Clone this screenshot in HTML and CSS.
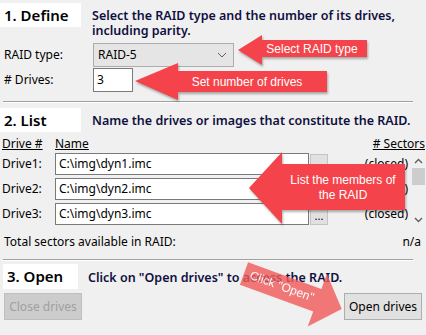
FILE: index.html
```html
<!DOCTYPE HTML>
<html lang="en">
  <head>
  <title>Mount RAID</title>
  <meta charset="utf-8">
  <link rel="stylesheet" href="styles.css">
  </head>

  <body>

  <div id="panel">

    <div class="step">
      <div class="stepHead">
        <div class="stepTitle">1. Define</div>
        <div class="stepText">Select the RAID type and the number of its drives, including parity.</div>
      </div>
      <div class="fields">
        <div class="field">
          <span class="label">RAID type:</span>
          <div class="combo">
            <span>RAID-5</span>
            <svg width="10" height="6" viewBox="0 0 10 6"><path d="M1 1 L5 5 L9 1" fill="none" stroke="#606060" stroke-width="1"/></svg>
          </div>
        </div>
        <div class="field">
          <span class="label"># Drives:</span>
          <div class="numBox">3</div>
        </div>
      </div>
    </div>

    <div class="divider"></div>

    <div class="step">
      <div class="stepHead">
        <div class="stepTitle">2. List</div>
        <div class="stepText">Name the drives or images that constitute the RAID.</div>
      </div>
      <div class="colHeads">
        <span class="colDrive">Drive #</span>
        <span class="colName">Name</span>
        <span class="colSectors"># Sectors</span>
      </div>
      <div class="driveList">
        <div class="driveRows">
          <div class="driveRow">
            <span class="driveLabel">Drive1:</span>
            <div class="nameBox">C:\img\dyn1.imc</div>
            <div class="browse"></div>
            <span class="sectors">(closed)</span>
          </div>
          <div class="driveRow">
            <span class="driveLabel">Drive2:</span>
            <div class="nameBox">C:\img\dyn2.imc</div>
            <div class="browse"></div>
            <span class="sectors">(closed)</span>
          </div>
          <div class="driveRow">
            <span class="driveLabel">Drive3:</span>
            <div class="nameBox">C:\img\dyn3.imc</div>
            <div class="browse">...</div>
            <span class="sectors">(closed)</span>
          </div>
        </div>
        <div class="scrollbar">
          <svg width="9" height="6" viewBox="0 0 9 6"><path d="M1 5 L4.5 1.5 L8 5" fill="none" stroke="#606060" stroke-width="1.4"/></svg>
          <div class="thumb"></div>
          <div class="track"></div>
          <svg width="9" height="6" viewBox="0 0 9 6"><path d="M1 1 L4.5 4.5 L8 1" fill="none" stroke="#606060" stroke-width="1.4"/></svg>
        </div>
      </div>
      <div class="totalRow">
        <span>Total sectors available in RAID:</span>
        <span>n/a</span>
      </div>
    </div>

    <div class="divider"></div>

    <div class="step last">
      <div class="stepHead">
        <div class="stepTitle small">3. Open</div>
        <div class="stepText">Click on "Open drives" to access the RAID.</div>
      </div>
      <div class="buttons">
        <div class="button disabled">Close drives</div>
        <div class="button">Open drives</div>
      </div>
    </div>

  </div>

  <svg id="notes" width="426" height="335" viewBox="0 0 426 335">
    <g class="note">
      <polygon points="238,50 262,35 262,40 367,40 367,57 262,57 262,65"/>
      <text x="312" y="53">Select RAID type</text>
    </g>
    <g class="note">
      <polygon points="135,81 178,63 178,71 327,71 327,92 178,92 178,100"/>
      <text x="247" y="86">Set number of drives</text>
    </g>
    <g class="note">
      <polygon points="249,188 282,152 282,164 405,164 405,210 282,210 282,224"/>
      <text x="343" y="184">List the members of</text>
      <text x="343" y="199">the RAID</text>
    </g>
    <g class="note faded" transform="translate(244 273.5) rotate(20)">
      <polygon points="0,-12 78,-12 78,-28 104,0 78,28 78,12 0,12"/>
      <text x="40" y="3">Click "Open"</text>
    </g>
  </svg>

  </body>

</html>
```

FILE: styles.css
```css
html {
  height: 100%;
}
body {
  margin: 0;
  padding: 0;
  background: #f0f0f0;
  color: #000000;
  font-family: "Noto Sans", sans-serif;
  font-size: 12px;
  line-height: 16px;
  height: 100%;
  position: relative;
  overflow: hidden;
}

#panel {
  padding-top: 3px;
}

.stepHead {
  display: flex;
  align-items: flex-start;
}

.stepTitle {
  flex: none;
  width: 77px;
  height: 24px;
  padding-left: 4px;
  background: #ffffff;
  font-size: 15px;
  font-weight: 600;
  line-height: 24px;
  white-space: nowrap;
}

.stepTitle.small {
  width: 71px;
  margin-left: 3px;
  height: 25px;
  line-height: 25px;
}

.stepText {
  margin-left: 11px;
  margin-top: 5px;
  font-size: 12.5px;
  font-weight: 600;
  color: #101040;
  line-height: 15px;
}

.small + .stepText {
  margin-left: 10px;
  margin-top: 6px;
}

.fields {
  display: flex;
  flex-direction: column;
  gap: 1px;
  margin-top: 5px;
}

.field {
  display: flex;
  align-items: center;
  height: 24px;
}

.label {
  width: 89px;
  padding-left: 4px;
}

.combo {
  width: 141px;
  height: 24px;
  box-sizing: border-box;
  border: 1px solid #adadad;
  background: #e5e5e5;
  display: flex;
  align-items: center;
  justify-content: space-between;
  padding: 0 6px 0 4px;
}

.numBox {
  width: 40px;
  height: 24px;
  box-sizing: border-box;
  border: 1px solid #7a7a7a;
  background: #ffffff;
  padding-left: 3px;
  line-height: 22px;
}

.divider {
  margin: 9px 13px 5px 3px;
  border-top: 1px solid #a0a0a0;
  border-bottom: 1px solid #ffffff;
}

.step.last {
  margin-top: -2px;
}

.colHeads {
  display: flex;
  margin-top: 4px;
  height: 16px;
}

.colHeads span {
  text-decoration: underline;
}

.colDrive {
  width: 53px;
  padding-left: 2px;
}

.colName {
  flex: 1;
}

.colSectors {
  padding-right: 1px;
}

.driveList {
  display: flex;
  margin-top: 1px;
}

.driveRows {
  flex: 1;
  display: flex;
  flex-direction: column;
  gap: 3px;
}

.driveRow {
  display: flex;
  align-items: center;
  height: 22px;
}

.driveLabel {
  width: 53px;
  padding-left: 2px;
}

.nameBox {
  width: 254px;
  height: 22px;
  box-sizing: border-box;
  border: 1px solid #7a7a7a;
  background: #ffffff;
  padding-left: 3px;
  line-height: 20px;
}

.browse {
  width: 18px;
  height: 21px;
  margin-left: 1px;
  box-sizing: border-box;
  border: 1px solid #c4c4c4;
  background: #e1e1e1;
  font-size: 11px;
  line-height: 22px;
  text-align: center;
}

.sectors {
  flex: 1;
  text-align: right;
  padding-right: 2px;
}

.scrollbar {
  width: 16px;
  height: 72px;
  display: flex;
  flex-direction: column;
  align-items: center;
  padding: 5px 0 2px;
  box-sizing: border-box;
}

.scrollbar svg {
  flex: none;
}

.thumb {
  width: 13px;
  height: 17px;
  margin-top: 4px;
  background: #cdcdcd;
}

.track {
  flex: 1;
}

.totalRow {
  display: flex;
  justify-content: space-between;
  padding: 9px 5px 0 4px;
}

.buttons {
  display: flex;
  justify-content: space-between;
  padding: 4px 4px 0 4px;
}

.button {
  width: 78px;
  height: 27px;
  box-sizing: border-box;
  border: 1px solid #adadad;
  background: #e1e1e1;
  text-align: center;
  line-height: 25px;
}

.button.disabled {
  border-color: #bfbfbf;
  background: #cccccc;
  color: #a0a0a0;
}

#notes {
  position: absolute;
  left: 0;
  top: 0;
}

.note polygon {
  fill: #f4434a;
  filter: drop-shadow(1px 2px 1px rgba(0,0,0,0.3));
}

.note text {
  fill: #ffffff;
  font-family: "Liberation Sans", Arial, sans-serif;
  font-size: 12px;
  text-anchor: middle;
}

.note.faded {
  opacity: 0.8;
}

.note.faded polygon {
  fill: #f25a5a;
  filter: none;
}
```
